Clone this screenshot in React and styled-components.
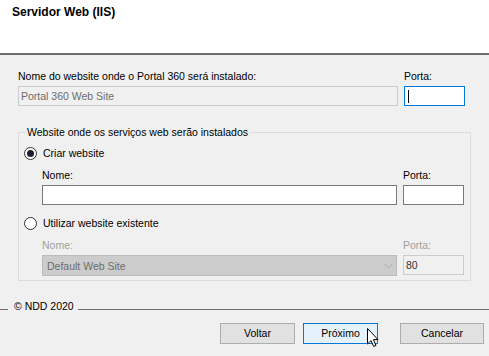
import React from "react";
import styled, { createGlobalStyle } from "styled-components";

const Global = createGlobalStyle`
  html, body { margin: 0; padding: 0; background: #f0f0f0; }
  body { font-family: "Liberation Sans", Arial, sans-serif; font-size: 10.5px; color: #000; }
`;

const Window = styled.div`
  width: 489px;
  height: 356px;
  display: flex;
  flex-direction: column;
  background: #f0f0f0;
  overflow: hidden;
`;

const Header = styled.div`
  height: 53px;
  box-sizing: content-box;
  background: #fff;
  border-bottom: 2px solid #6e6e6e;
  padding: 0 12px;
`;

const Title = styled.div`
  font-size: 12px;
  font-weight: bold;
  line-height: 15px;
  padding-top: 5px;
`;

const Content = styled.div`
  padding: 15px 18px 0 18px;
  display: flex;
  flex-direction: column;
`;

const FieldGrid = styled.div`
  display: grid;
  grid-template-columns: 1fr 61px;
  column-gap: 6px;
  margin: ${(p) => p.$margin || "0"};
`;

const Field = styled.div`
  display: flex;
  flex-direction: column;
`;

const Label = styled.div`
  line-height: 13px;
  height: 13px;
  margin-bottom: 3px;
  white-space: nowrap;
  color: ${(p) => (p.$disabled ? "#a0a0a0" : "#000")};
`;

const TextBox = styled.div`
  box-sizing: border-box;
  height: 20px;
  border: 1px solid ${(p) => (p.$focused ? "#0078d7" : p.$disabled ? "#cccccc" : "#7a7a7a")};
  background: ${(p) => (p.$disabled ? "#f0f0f0" : "#fff")};
  color: ${(p) => p.$color || "#000"};
  padding: 0 2px;
  display: flex;
  align-items: center;
  white-space: nowrap;
`;

const Caret = styled.span`
  width: 1px;
  height: 13px;
  background: #000;
  margin-left: 1px;
`;

const Combo = styled.div`
  box-sizing: border-box;
  height: 21px;
  border: 1px solid #bcbcbc;
  background: #cccccc;
  color: #6d6d6d;
  padding: 0 3px 0 4px;
  display: flex;
  align-items: center;
  justify-content: space-between;
`;

const Group = styled.div`
  position: relative;
  margin-top: 26px;
  border: 1px solid #dcdcdc;
  padding: 14px 6px 4px 5px;
  display: flex;
  flex-direction: column;
`;

const Legend = styled.div`
  position: absolute;
  top: -7px;
  left: 7px;
  padding: 0 1px;
  line-height: 13px;
  background: #f0f0f0;
  white-space: nowrap;
`;

const RadioRow = styled.div`
  display: flex;
  align-items: center;
  gap: 6px;
  height: 13px;
  line-height: 13px;
  margin-top: ${(p) => p.$mt || 0}px;
`;

const RadioCircle = styled.span`
  box-sizing: border-box;
  width: 13px;
  height: 13px;
  border-radius: 50%;
  border: 1px solid #333;
  background: #fff;
  display: flex;
  align-items: center;
  justify-content: center;
  &::after {
    content: "";
    display: ${(p) => (p.$checked ? "block" : "none")};
    width: 7px;
    height: 7px;
    border-radius: 50%;
    background: #201c30;
  }
`;

const Indented = styled.div`
  margin-left: 18px;
`;

const Footer = styled.div`
  display: flex;
  align-items: flex-start;
  margin-top: 19px;
  height: 13px;
`;

const FooterLine = styled.div`
  height: 0;
  border-top: 1px solid #6e6e6e;
  margin-top: 9px;
  width: ${(p) => (p.$w ? p.$w + "px" : "auto")};
  flex: ${(p) => (p.$w ? "none" : "1")};
`;

const FooterText = styled.div`
  line-height: 13px;
  padding: 0 4px 0 6px;
  white-space: nowrap;
`;

const ButtonRow = styled.div`
  display: flex;
  justify-content: flex-end;
  margin-top: 10px;
  padding-right: 5px;
`;

const Button = styled.div`
  position: relative;
  box-sizing: border-box;
  width: ${(p) => p.$w}px;
  height: 21px;
  margin-left: ${(p) => p.$ml || 0}px;
  border: 1px solid ${(p) => (p.$active ? "#0078d7" : "#adadad")};
  background: ${(p) => (p.$active ? "#e5f1fb" : "#e1e1e1")};
  display: flex;
  align-items: center;
  justify-content: center;
  line-height: 13px;
`;

const Cursor = styled.svg`
  position: absolute;
  left: 62px;
  top: 3px;
`;

export default function App() {
  return (
    <>
      <Global />
      <Window>
        <Header>
          <Title>Servidor Web (IIS)</Title>
        </Header>
        <Content>
          <FieldGrid $margin="0 6px 0 0">
            <Field>
              <Label>Nome do website onde o Portal 360 será instalado:</Label>
              <TextBox $disabled $color="#6d6d6d">Portal 360 Web Site</TextBox>
            </Field>
            <Field>
              <Label>Porta:</Label>
              <TextBox $focused>
                <Caret />
              </TextBox>
            </Field>
          </FieldGrid>

          <Group>
            <Legend>Website onde os serviços web serão instalados</Legend>
            <RadioRow>
              <RadioCircle $checked />
              <span>Criar website</span>
            </RadioRow>
            <Indented>
              <FieldGrid $margin="9px 0 0 0">
                <Field>
                  <Label>Nome:</Label>
                  <TextBox />
                </Field>
                <Field>
                  <Label>Porta:</Label>
                  <TextBox />
                </Field>
              </FieldGrid>
            </Indented>
            <RadioRow $mt={12}>
              <RadioCircle />
              <span>Utilizar website existente</span>
            </RadioRow>
            <Indented>
              <FieldGrid $margin="9px 0 0 0">
                <Field>
                  <Label $disabled>Nome:</Label>
                  <Combo>
                    <span>Default Web Site</span>
                    <svg width="9" height="6" viewBox="0 0 9 6">
                      <path d="M0.5 0.8 L4.5 4.8 L8.5 0.8" fill="none" stroke="#a8a8a8" strokeWidth="1" />
                    </svg>
                  </Combo>
                </Field>
                <Field>
                  <Label $disabled>Porta:</Label>
                  <TextBox $disabled $color="#333">80</TextBox>
                </Field>
              </FieldGrid>
            </Indented>
          </Group>
        </Content>

        <Footer>
          <FooterLine $w={8} />
          <FooterText>© NDD 2020</FooterText>
          <FooterLine />
        </Footer>

        <ButtonRow>
          <Button $w={75}>Voltar</Button>
          <Button $w={75} $ml={8} $active>
            Próximo
            <Cursor width="13" height="21" viewBox="0 0 13 21">
              <path
                d="M1.5 1.5 L1.5 17 L5 13.6 L7.6 19.4 L10 18.4 L7.4 12.6 L12 12.6 Z"
                fill="#fff"
                stroke="#000"
                strokeWidth="1"
                strokeLinejoin="miter"
              />
            </Cursor>
          </Button>
          <Button $w={84} $ml={22}>Cancelar</Button>
        </ButtonRow>
      </Window>
    </>
  );
}
